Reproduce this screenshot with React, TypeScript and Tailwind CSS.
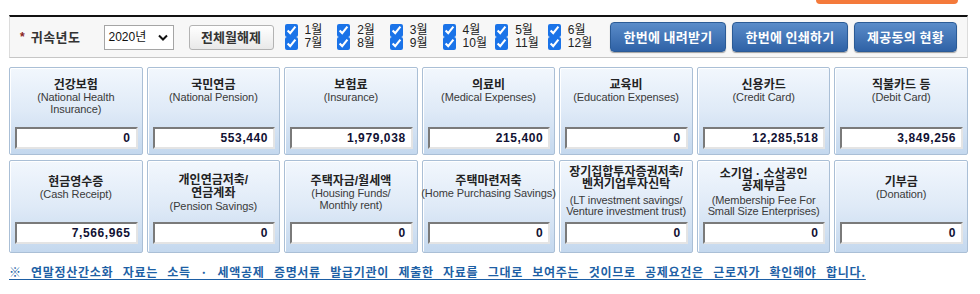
import React from "react";

type Card = {
  title: string[];
  sub: string[];
  value: string;
  pad: string; // top padding of the label block
  titleLead: string;
  subGap: string;
  subLead: string;
};

const ROW1: Card[] = [
  { title: ["건강보험"], sub: ["(National Health", "Insurance)"], value: "0", pad: "pt-[11px]", titleLead: "leading-[12px]", subGap: "mt-0", subLead: "leading-[12px]" },
  { title: ["국민연금"], sub: ["(National Pension)"], value: "553,440", pad: "pt-[11px]", titleLead: "leading-[12px]", subGap: "mt-0", subLead: "leading-[12px]" },
  { title: ["보험료"], sub: ["(Insurance)"], value: "1,979,038", pad: "pt-[11px]", titleLead: "leading-[12px]", subGap: "mt-0", subLead: "leading-[12px]" },
  { title: ["의료비"], sub: ["(Medical Expenses)"], value: "215,400", pad: "pt-[11px]", titleLead: "leading-[12px]", subGap: "mt-0", subLead: "leading-[12px]" },
  { title: ["교육비"], sub: ["(Education Expenses)"], value: "0", pad: "pt-[11px]", titleLead: "leading-[12px]", subGap: "mt-0", subLead: "leading-[12px]" },
  { title: ["신용카드"], sub: ["(Credit Card)"], value: "12,285,518", pad: "pt-[11px]", titleLead: "leading-[12px]", subGap: "mt-0", subLead: "leading-[12px]" },
  { title: ["직불카드 등"], sub: ["(Debit Card)"], value: "3,849,256", pad: "pt-[11px]", titleLead: "leading-[12px]", subGap: "mt-0", subLead: "leading-[12px]" },
];

const ROW2: Card[] = [
  { title: ["현금영수증"], sub: ["(Cash Receipt)"], value: "7,566,965", pad: "pt-[15px]", titleLead: "leading-[12px]", subGap: "mt-0", subLead: "leading-[12px]" },
  { title: ["개인연금저축/", "연금계좌"], sub: ["(Pension Savings)"], value: "0", pad: "pt-[13px]", titleLead: "leading-[13px]", subGap: "mt-0", subLead: "leading-[12px]" },
  { title: ["주택자금/월세액"], sub: ["(Housing Funds/", "Monthly rent)"], value: "0", pad: "pt-[14px]", titleLead: "leading-[12px]", subGap: "mt-0", subLead: "leading-[12px]" },
  { title: ["주택마련저축"], sub: ["(Home Purchasing Savings)"], value: "0", pad: "pt-[14px]", titleLead: "leading-[12px]", subGap: "mt-0", subLead: "leading-[12px]" },
  { title: ["장기집합투자증권저축/", "벤처기업투자신탁"], sub: ["(LT investment savings/", "Venture investment trust)"], value: "0", pad: "pt-[5px]", titleLead: "leading-[12px]", subGap: "mt-[5px]", subLead: "leading-[11px]" },
  { title: ["소기업 · 소상공인", "공제부금"], sub: ["(Membership Fee For", "Small Size Enterprises)"], value: "0", pad: "pt-[7px]", titleLead: "leading-[12px]", subGap: "mt-[3px]", subLead: "leading-[11px]" },
  { title: ["기부금"], sub: ["(Donation)"], value: "0", pad: "pt-[15px]", titleLead: "leading-[12px]", subGap: "mt-0", subLead: "leading-[12px]" },
];

const MONTHS = [1, 2, 3, 4, 5, 6, 7, 8, 9, 10, 11, 12];

function DeductionCard({ card, tall }: { card: Card; tall?: boolean }) {
  return (
    <div
      className={[
        "flex flex-col rounded-[2px] border border-[#aabfd6]",
        "bg-gradient-to-b from-[#f2f7fd] via-[#dfeaf7] to-[#c4d8ee]",
        "shadow-[inset_1px_1px_0_#ffffff]",
        tall ? "h-[93px]" : "h-[88px]",
      ].join(" ")}
    >
      <div className={`flex flex-col items-center text-center ${card.pad}`}>
        <div className={`whitespace-nowrap font-['Liberation_Sans','Noto_Sans_CJK_KR',sans-serif] text-[12px] font-bold text-[#222] ${card.titleLead}`}>
          {card.title.map((t) => (
            <div key={t}>{t}</div>
          ))}
        </div>
        <div className={`whitespace-nowrap font-['Liberation_Sans',sans-serif] text-[11px] tracking-[-0.1px] text-[#3a3a3a] ${card.subGap} ${card.subLead}`}>
          {card.sub.map((s) => (
            <div key={s}>{s}</div>
          ))}
        </div>
      </div>

      {/* amount box — classic inset field */}
      <div
        className={[
          "mt-auto ml-[5px] mr-[4px] flex h-[22px] items-center justify-end bg-white pr-[5px]",
          "border-2 border-t-[#7a7a7a] border-l-[#7a7a7a] border-b-[#e4e4e4] border-r-[#e4e4e4]",
          tall ? "mb-[8px]" : "mb-[5px]",
        ].join(" ")}
      >
        <span className="font-['Liberation_Sans',sans-serif] text-[12px] font-bold tracking-[0.6px] text-[#111133]">
          {card.value}
        </span>
      </div>
    </div>
  );
}

function BlueButton({ label, w }: { label: string; w: string }) {
  return (
    <button
      className={[
        w,
        "h-[30px] rounded-[4px] border border-[#2b5b96]",
        "bg-gradient-to-b from-[#5a8cc9] to-[#2f62a6]",
        "font-['Noto_Sans_CJK_KR',sans-serif] text-[13px] font-bold tracking-[0.3px] text-white",
        "shadow-[0_1px_1px_rgba(0,0,0,0.35)]",
      ].join(" ")}
    >
      {label}
    </button>
  );
}

export default function App() {
  return (
    <div className="h-[294px] w-[980px] overflow-hidden bg-white">
      {/* orange tab peeking in from above */}
      <div className="flex h-[15px] justify-end pr-[22px]">
        <div className="h-[4px] w-[142px] rounded-b-[4px] bg-[#f47a3b]" />
      </div>

      {/* ── Toolbar ─────────────────────────────────────────── */}
      <div className="ml-[9px] flex h-[43px] w-[959px] items-center border-t-2 border-b border-x border-t-[#111] border-b-[#c6c6c6] border-x-[#dcdcdc] bg-[#f7f7f7] pl-[10px] pr-[10px]">
        <span className="font-['Liberation_Sans',sans-serif] text-[12px] font-bold text-[#8a2222]">*</span>
        <span className="ml-[6px] font-['Noto_Sans_CJK_KR',sans-serif] text-[13px] font-bold tracking-[0.5px] text-[#333]">귀속년도</span>

        <div className="ml-[23px] flex h-[25px] w-[70px] items-center justify-between border border-[#a5a5a5] bg-white pl-[4px] pr-[5px]">
          <span className="font-['Liberation_Sans','Noto_Sans_CJK_KR',sans-serif] text-[12px] text-[#111]">2020년</span>
          <svg width="10" height="7" viewBox="0 0 10 7">
            <path d="M1 1.5 L5 5.5 L9 1.5" fill="none" stroke="#111" strokeWidth="2" />
          </svg>
        </div>

        <button className="ml-[15px] h-[25px] w-[85px] rounded-[3px] border border-[#b3b3b3] bg-gradient-to-b from-[#ffffff] to-[#e9e9e9] font-['Noto_Sans_CJK_KR',sans-serif] text-[13px] font-bold text-[#333]">
          전체월해제
        </button>

        <div className="ml-[11px] grid w-[316px] grid-cols-6">
          {MONTHS.map((m) => (
            <label key={m} className="flex h-[13px] items-center">
              <input type="checkbox" defaultChecked className="h-[13px] w-[13px] accent-[#1a73e8]" />
              <span className="ml-[7px] font-['Liberation_Sans','Noto_Sans_CJK_KR',sans-serif] text-[12px] leading-[13px] text-[#222]">
                {m}월
              </span>
            </label>
          ))}
        </div>

        <div className="ml-auto flex gap-[6px]">
          <BlueButton label="한번에 내려받기" w="w-[116px]" />
          <BlueButton label="한번에 인쇄하기" w="w-[116px]" />
          <BlueButton label="제공동의 현황" w="w-[103px]" />
        </div>
      </div>

      {/* ── Deduction cards ─────────────────────────────────── */}
      <div className="ml-[9px] mt-[9px] grid w-[959px] grid-cols-7 gap-x-[4px] gap-y-[5px]">
        {ROW1.map((c) => (
          <DeductionCard key={c.title.join()} card={c} />
        ))}
        {ROW2.map((c) => (
          <DeductionCard key={c.title.join()} card={c} tall />
        ))}
      </div>

      {/* ── Notice ──────────────────────────────────────────── */}
      <p className="ml-[9px] mt-[11px] whitespace-nowrap font-['Noto_Sans_CJK_KR',sans-serif] text-[12px] font-bold leading-[16px] tracking-[0.7px] text-[#1d5fa5] underline underline-offset-2 [word-spacing:6px]">
        ※ 연말정산간소화 자료는 소득 · 세액공제 증명서류 발급기관이 제출한 자료를 그대로 보여주는 것이므로 공제요건은 근로자가 확인해야 합니다.
      </p>
    </div>
  );
}
